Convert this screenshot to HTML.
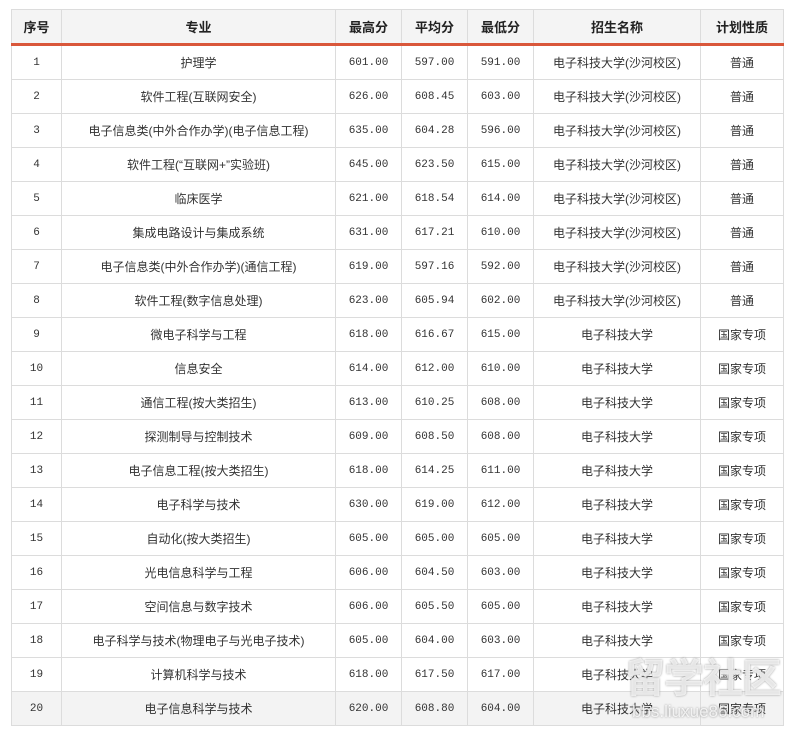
<!DOCTYPE html><html><head><meta charset="utf-8"><style>
body{margin:0;background:#fff;width:794px;height:734px;overflow:hidden;position:relative}
table{position:absolute;left:11px;top:9px;border-collapse:collapse;table-layout:fixed;width:772px;font-family:"Liberation Sans","Noto Sans CJK SC",sans-serif;font-size:12px;color:#333}
td,th{border:1px solid #dcdcdc;text-align:center;height:33px;padding:0}
th{background:#f4f4f4;font-weight:bold;font-size:13px;height:33px;border-bottom:3px solid #d9573a;color:#222}
td.n{font-family:"Liberation Mono",monospace;font-size:11px}
tr.last td{background:#f3f3f3}
.wm{position:absolute;left:625px;top:655px;white-space:nowrap;font:bold 40px/1 "Noto Sans CJK SC",sans-serif;color:rgba(255,255,255,0.75);text-shadow:0 0 2px #999;letter-spacing:-1px}
.wm2{position:absolute;left:632px;top:703px;white-space:nowrap;font:17px/1 "Liberation Sans",sans-serif;color:rgba(255,255,255,0.8);text-shadow:0 0 2px #888}
</style></head><body>
<table>
<colgroup><col style="width:50px"><col style="width:274px"><col style="width:66px"><col style="width:66px"><col style="width:66px"><col style="width:167px"><col style="width:83px"></colgroup>
<tr><th>序号</th><th>专业</th><th>最高分</th><th>平均分</th><th>最低分</th><th>招生名称</th><th>计划性质</th></tr>
<tr><td class="n">1</td><td>护理学</td><td class="n">601.00</td><td class="n">597.00</td><td class="n">591.00</td><td>电子科技大学(沙河校区)</td><td>普通</td></tr>
<tr><td class="n">2</td><td>软件工程(互联网安全)</td><td class="n">626.00</td><td class="n">608.45</td><td class="n">603.00</td><td>电子科技大学(沙河校区)</td><td>普通</td></tr>
<tr><td class="n">3</td><td>电子信息类(中外合作办学)(电子信息工程)</td><td class="n">635.00</td><td class="n">604.28</td><td class="n">596.00</td><td>电子科技大学(沙河校区)</td><td>普通</td></tr>
<tr><td class="n">4</td><td>软件工程(“互联网+”实验班)</td><td class="n">645.00</td><td class="n">623.50</td><td class="n">615.00</td><td>电子科技大学(沙河校区)</td><td>普通</td></tr>
<tr><td class="n">5</td><td>临床医学</td><td class="n">621.00</td><td class="n">618.54</td><td class="n">614.00</td><td>电子科技大学(沙河校区)</td><td>普通</td></tr>
<tr><td class="n">6</td><td>集成电路设计与集成系统</td><td class="n">631.00</td><td class="n">617.21</td><td class="n">610.00</td><td>电子科技大学(沙河校区)</td><td>普通</td></tr>
<tr><td class="n">7</td><td>电子信息类(中外合作办学)(通信工程)</td><td class="n">619.00</td><td class="n">597.16</td><td class="n">592.00</td><td>电子科技大学(沙河校区)</td><td>普通</td></tr>
<tr><td class="n">8</td><td>软件工程(数字信息处理)</td><td class="n">623.00</td><td class="n">605.94</td><td class="n">602.00</td><td>电子科技大学(沙河校区)</td><td>普通</td></tr>
<tr><td class="n">9</td><td>微电子科学与工程</td><td class="n">618.00</td><td class="n">616.67</td><td class="n">615.00</td><td>电子科技大学</td><td>国家专项</td></tr>
<tr><td class="n">10</td><td>信息安全</td><td class="n">614.00</td><td class="n">612.00</td><td class="n">610.00</td><td>电子科技大学</td><td>国家专项</td></tr>
<tr><td class="n">11</td><td>通信工程(按大类招生)</td><td class="n">613.00</td><td class="n">610.25</td><td class="n">608.00</td><td>电子科技大学</td><td>国家专项</td></tr>
<tr><td class="n">12</td><td>探测制导与控制技术</td><td class="n">609.00</td><td class="n">608.50</td><td class="n">608.00</td><td>电子科技大学</td><td>国家专项</td></tr>
<tr><td class="n">13</td><td>电子信息工程(按大类招生)</td><td class="n">618.00</td><td class="n">614.25</td><td class="n">611.00</td><td>电子科技大学</td><td>国家专项</td></tr>
<tr><td class="n">14</td><td>电子科学与技术</td><td class="n">630.00</td><td class="n">619.00</td><td class="n">612.00</td><td>电子科技大学</td><td>国家专项</td></tr>
<tr><td class="n">15</td><td>自动化(按大类招生)</td><td class="n">605.00</td><td class="n">605.00</td><td class="n">605.00</td><td>电子科技大学</td><td>国家专项</td></tr>
<tr><td class="n">16</td><td>光电信息科学与工程</td><td class="n">606.00</td><td class="n">604.50</td><td class="n">603.00</td><td>电子科技大学</td><td>国家专项</td></tr>
<tr><td class="n">17</td><td>空间信息与数字技术</td><td class="n">606.00</td><td class="n">605.50</td><td class="n">605.00</td><td>电子科技大学</td><td>国家专项</td></tr>
<tr><td class="n">18</td><td>电子科学与技术(物理电子与光电子技术)</td><td class="n">605.00</td><td class="n">604.00</td><td class="n">603.00</td><td>电子科技大学</td><td>国家专项</td></tr>
<tr><td class="n">19</td><td>计算机科学与技术</td><td class="n">618.00</td><td class="n">617.50</td><td class="n">617.00</td><td>电子科技大学</td><td>国家专项</td></tr>
<tr class="last"><td class="n">20</td><td>电子信息科学与技术</td><td class="n">620.00</td><td class="n">608.80</td><td class="n">604.00</td><td>电子科技大学</td><td>国家专项</td></tr>
</table>
<div class="wm">留学社区</div>
<div class="wm2">bbs.liuxue86.com</div>
</body></html>
